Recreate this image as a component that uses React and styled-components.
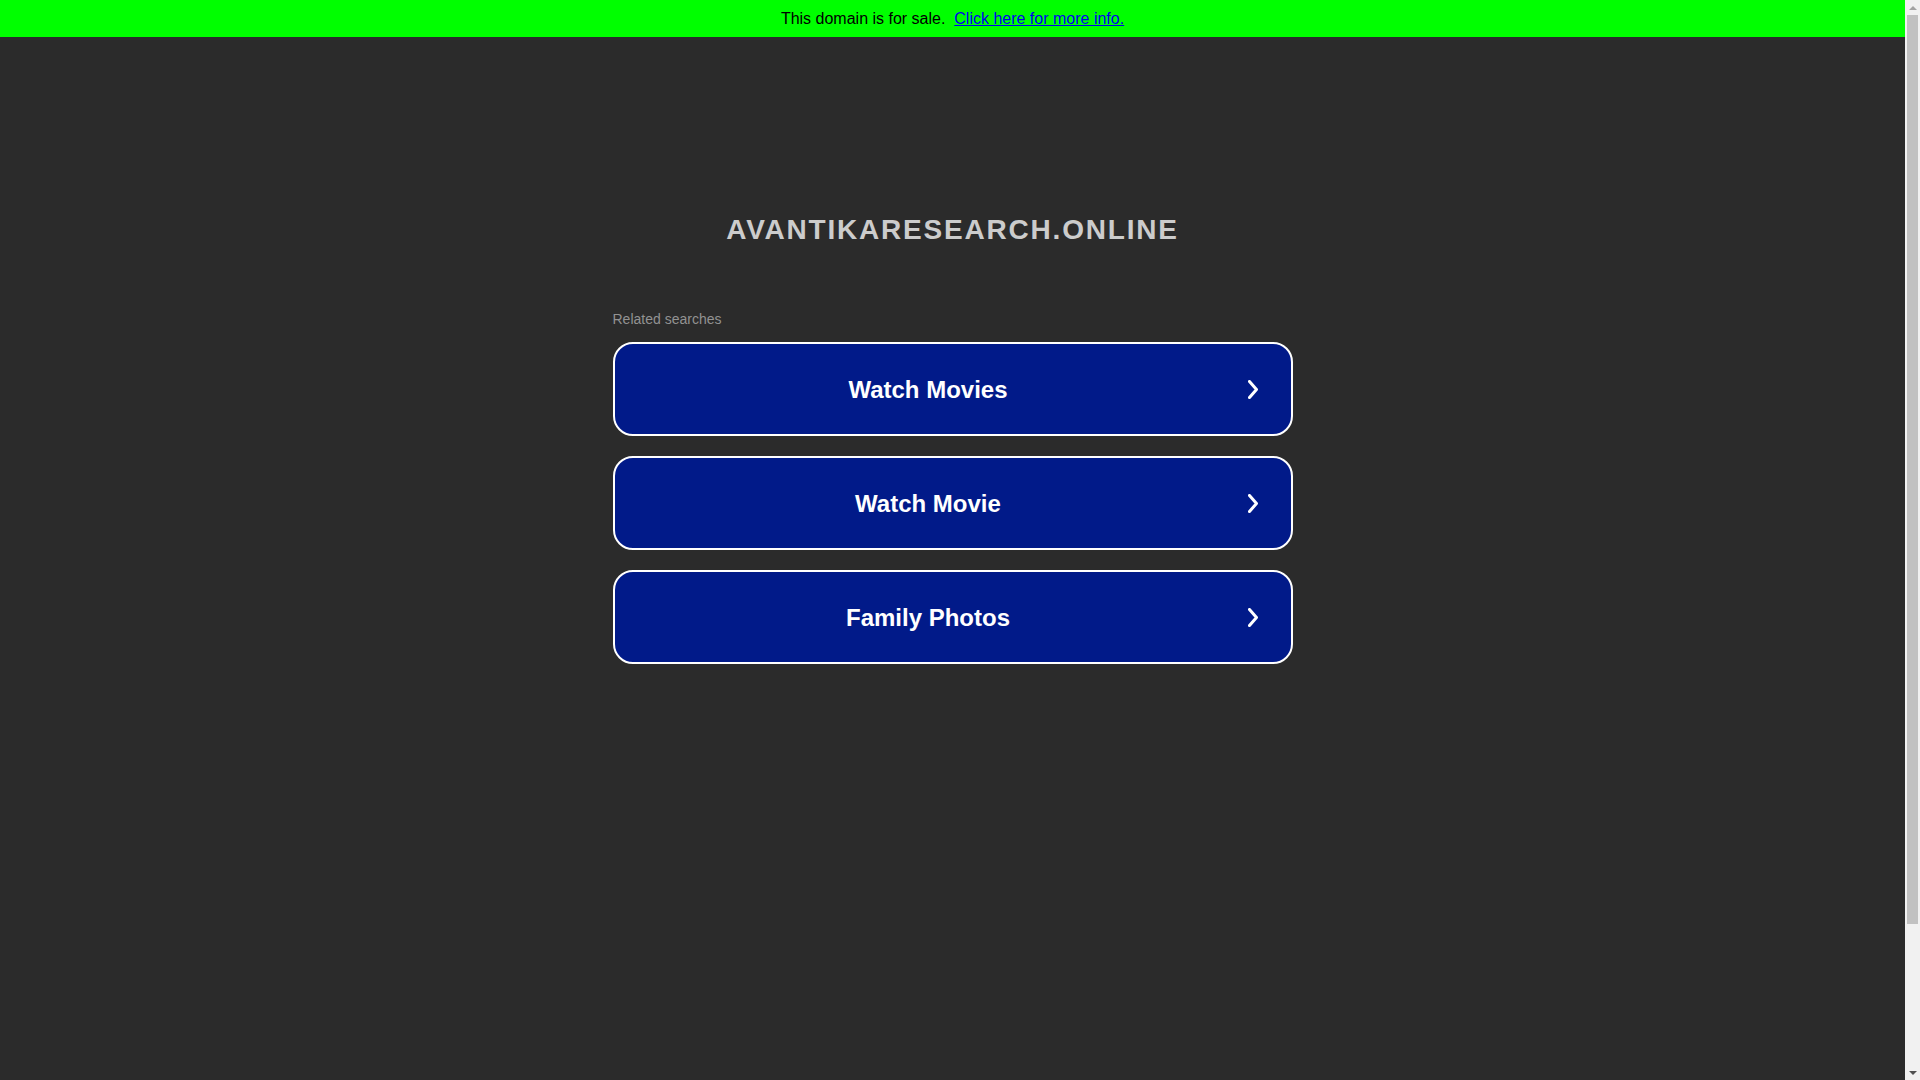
import React from "react";
import styled, { createGlobalStyle } from "styled-components";

const GlobalStyle = createGlobalStyle`
  html, body {
    margin: 0;
    padding: 0;
    background: #2b2b2b;
    font-family: "Liberation Sans", Arial, sans-serif;
  }
`;

const searches = ["Watch Movies", "Watch Movie", "Family Photos"];

const Page = styled.div`
  min-height: 1247px;
  margin-right: 15px;
  display: flex;
  flex-direction: column;
`;

const SaleBar = styled.div`
  height: 37px;
  line-height: 37px;
  background: #00ff00;
  color: #000;
  font-size: 16px;
  text-align: center;

  & a {
    color: #0000ee;
    text-decoration: underline;
  }
`;

const Domain = styled.h1`
  margin: 177px 0 0;
  font-size: 28px;
  line-height: 32px;
  font-weight: 700;
  letter-spacing: 1.8px;
  color: #cccccc;
  text-align: center;
`;

const Column = styled.div`
  width: 680px;
  margin: 65px auto 0;
  display: flex;
  flex-direction: column;
`;

const Label = styled.div`
  font-size: 14px;
  line-height: 16px;
  color: #929292;
  margin-bottom: 15px;
`;

const List = styled.div`
  display: flex;
  flex-direction: column;
  gap: 20px;
`;

const SearchButton = styled.a`
  box-sizing: border-box;
  height: 94px;
  display: flex;
  align-items: center;
  padding-right: 33px;
  background: #011a89;
  border: 2px solid #ffffff;
  border-radius: 20px;
  color: #ffffff;
  text-decoration: none;
  cursor: pointer;
`;

const ButtonText = styled.span`
  flex: 1;
  text-align: center;
  font-size: 24px;
  font-weight: 700;
  padding-top: 2px;
`;

const Chevron = styled.svg`
  flex: none;
  margin-left: 6px;
`;

// classic window scrollbar, drawn because the headless shot hides the real one
const ScrollTrack = styled.div`
  position: fixed;
  top: 0;
  right: 0;
  width: 15px;
  height: 100vh;
  background: #f1f1f1;
  display: flex;
  flex-direction: column;
  align-items: center;
`;

const Arrow = styled.div`
  flex: none;
  height: 15px;
  width: 15px;
  display: flex;
  align-items: center;
  justify-content: center;

  &::after {
    content: "";
    border-left: 4px solid transparent;
    border-right: 4px solid transparent;
    ${p => p.down
      ? "border-top: 4px solid #505050;"
      : "border-bottom: 4px solid #a3a3a3;"}
  }
`;

const ScrollThumb = styled.div`
  width: 11px;
  height: 909px;
  background: #c1c1c1;
`;

const ScrollRest = styled.div`
  flex: 1;
`;

const App = () => (
  <>
    <GlobalStyle />
    <Page>
      <SaleBar>
        This domain is for sale.{"\u00a0 "}
        <a href="#">Click here for more info.</a>
      </SaleBar>

      <Domain>AVANTIKARESEARCH.ONLINE</Domain>

      <Column>
        <Label>Related searches</Label>
        <List>
          {searches.map(s => (
            <SearchButton key={s}>
              <ButtonText>{s}</ButtonText>
              <Chevron width="10" height="19" viewBox="0 0 10 19">
                <polyline
                  points="1.5,1.5 8.5,9.5 1.5,17.5"
                  fill="none"
                  stroke="#ffffff"
                  strokeWidth="3"
                  strokeLinecap="round"
                  strokeLinejoin="round"
                />
              </Chevron>
            </SearchButton>
          ))}
        </List>
      </Column>
    </Page>

    <ScrollTrack>
      <Arrow />
      <ScrollThumb />
      <ScrollRest />
      <Arrow down />
    </ScrollTrack>
  </>
);

export default App;
